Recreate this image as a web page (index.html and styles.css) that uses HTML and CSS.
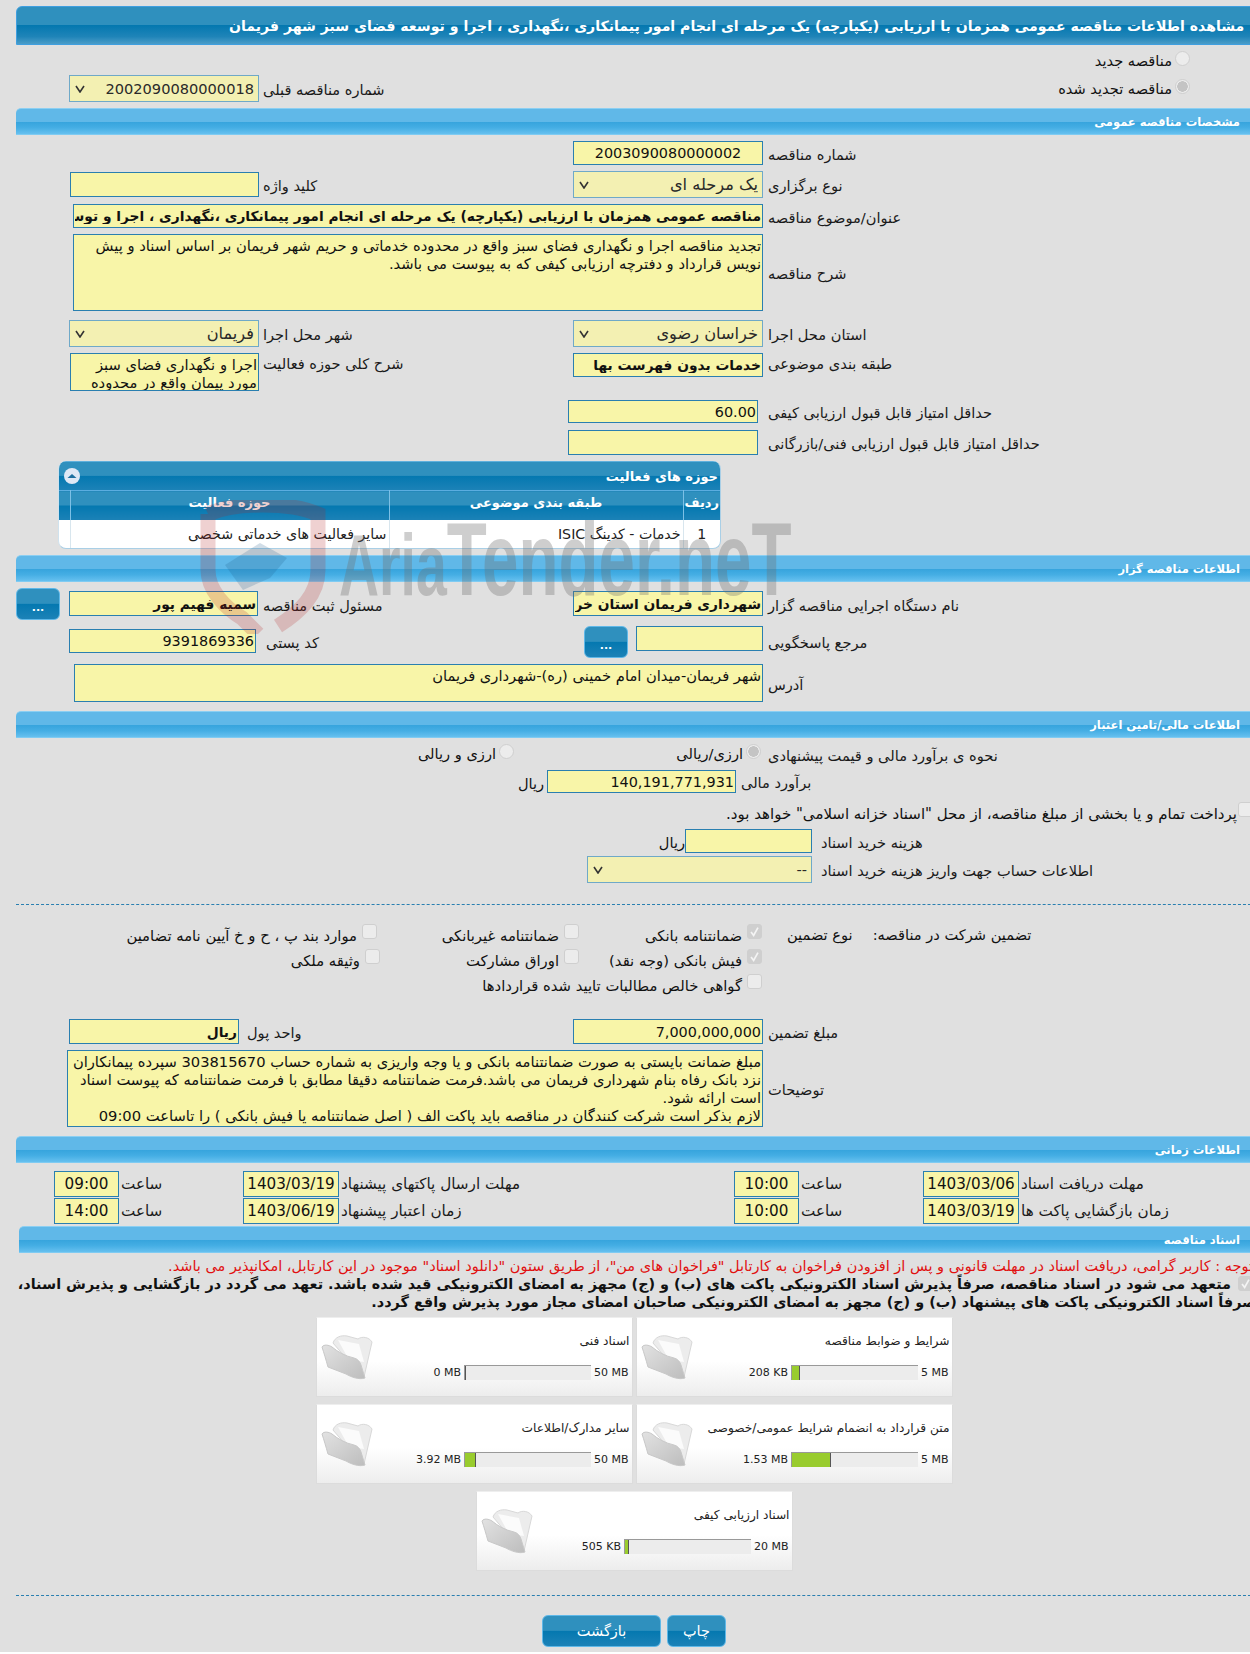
FILE: index.html
```html
<!DOCTYPE html>
<html lang="fa">
<head>
<meta charset="utf-8">
<title>مشاهده اطلاعات مناقصه</title>
<link rel="stylesheet" href="styles.css">
</head>
<body>
<div class="page">
  <div class="pagehead"><span>مشاهده اطلاعات مناقصه عمومی همزمان با ارزیابی (یکپارچه) یک مرحله ای انجام امور پیمانکاری ،نگهداری ، اجرا و توسعه فضای سبز شهر فریمان</span></div>

  <div class="row t6 h22">
    <label class="radio-opt d-end"><input type="radio" disabled><span>مناقصه جدید</span></label>
  </div>
  <div class="row t2 h27">
    <div class="sel a w190 digits"><select disabled><option>2002090080000018</option></select><svg class="chev" viewBox="0 0 10 8"><path d="M1 1l4 6 4-6" /></svg></div>
    <div class="lab b">شماره مناقصه قبلی</div>
    <label class="radio-opt d-end"><input type="radio" disabled checked><span>مناقصه تجدید شده</span></label>
  </div>

  <div class="bar t6">مشخصات مناقصه عمومی</div>

  <div class="row t6 h24">
    <input class="fld c w190" readonly value="2003090080000002" dir="ltr" >
    <div class="lab d">شماره مناقصه</div>
  </div>
  <div class="row t6 h27">
    <input class="fld a w189 h25 top1" readonly>
    <div class="lab b">کلید واژه</div>
    <div class="sel c w190"><select disabled><option>یک مرحله ای</option></select><svg class="chev" viewBox="0 0 10 8"><path d="M1 1l4 6 4-6" /></svg></div>
    <div class="lab d">نوع برگزاری</div>
  </div>
  <div class="row t6 h24">
    <input class="fld long w690 strong" readonly value="مناقصه عمومی همزمان با ارزیابی (یکپارچه) یک مرحله ای انجام امور پیمانکاری ،نگهداری ، اجرا و توسعه فضای سبز شهر فریمان">
    <div class="lab d">عنوان/موضوع مناقصه</div>
  </div>
  <div class="row t6 h77">
    <textarea class="fld long w690" readonly>تجدید مناقصه اجرا و نگهداری فضای سبز واقع در محدوده خدماتی و حریم شهر فریمان بر اساس اسناد و پیش نویس قرارداد و دفترچه ارزیابی کیفی که به پیوست می باشد.</textarea>
    <div class="lab d">شرح مناقصه</div>
  </div>
  <div class="row t9 h27">
    <div class="sel a w190"><select disabled><option>فریمان</option></select><svg class="chev" viewBox="0 0 10 8"><path d="M1 1l4 6 4-6" /></svg></div>
    <div class="lab b">شهر محل اجرا</div>
    <div class="sel c w190"><select disabled><option>خراسان رضوی</option></select><svg class="chev" viewBox="0 0 10 8"><path d="M1 1l4 6 4-6" /></svg></div>
    <div class="lab d">استان محل اجرا</div>
  </div>
  <div class="row t6 h38">
    <textarea class="fld a w189" readonly>اجرا و نگهداری فضای سبز مورد پیمان واقع در محدوده خدماتی</textarea>
    <div class="lab b hi">شرح کلی حوزه فعالیت</div>
    <input class="fld c w190 h24 strong" readonly value="خدمات بدون فهرست بها">
    <div class="lab d hi">طبقه بندی موضوعی</div>
  </div>
  <div class="row t9 h23">
    <input class="fld c w190 shift5" readonly value="60.00" dir="rtl">
    <div class="lab d">حداقل امتیاز قابل قبول ارزیابی کیفی</div>
  </div>
  <div class="row t7 h25">
    <input class="fld c w190 shift5" readonly>
    <div class="lab d">حداقل امتیاز قابل قبول ارزیابی فنی/بازرگانی</div>
  </div>

  <section class="panel">
    <div class="panel-head"><span>حوزه های فعالیت</span>
      <svg class="collapse" viewBox="0 0 16 16"><circle cx="8" cy="8" r="8" fill="#dfe8f5"/><path d="M3.500 10L8 6l4.500 4z" fill="#1f6f9f"/></svg>
    </div>
    <table class="grid">
      <thead><tr><th class="col-n">ردیف</th><th class="col-c">طبقه بندی موضوعی</th><th class="col-h">حوزه فعالیت</th><th class="col-x"></th></tr></thead>
      <tbody><tr><td class="num">1</td><td>خدمات - کدینگ ISIC</td><td>سایر فعالیت های خدماتی شخصی</td><td></td></tr></tbody>
    </table>
  </section>

  <div class="bar t6">اطلاعات مناقصه گزار</div>

  <div class="row t6 h32">
    <div class="a split">
      <button class="btn dots" type="button">...</button>
      <input class="fld w189 h25 strong top3" readonly value="سمیه فهیم پور">
    </div>
    <div class="lab b">مسئول ثبت مناقصه</div>
    <input class="fld c w190 h25 strong top3" readonly value="شهرداری فریمان استان خراسان رضوی">
    <div class="lab d">نام دستگاه اجرایی مناقصه گزار</div>
  </div>
  <div class="row t6 h31">
    <input class="fld a w187 h24 top3 shift3" readonly value="9391869336" >
    <div class="lab b wide">کد پستی</div>
    <div class="c gap8">
      <button class="btn dots" type="button">...</button>
      <input class="fld w127 h25" readonly>
    </div>
    <div class="lab d">مرجع پاسخگویی</div>
  </div>
  <div class="row t7 h38">
    <textarea class="fld long w689" readonly>شهر فریمان-میدان امام خمینی (ره)-شهرداری فریمان</textarea>
    <div class="lab d">آدرس</div>
  </div>

  <div class="bar t9">اطلاعات مالی/تامین اعتبار</div>

  <div class="row t6 h20">
    <div class="radios">
      <label class="radio-opt first"><input type="radio" disabled checked><span>ارزی/ریالی</span></label>
      <label class="radio-opt"><input type="radio" disabled><span>ارزی و ریالی</span></label>
    </div>
    <div class="lab d">نحوه ی برآورد مالی و قیمت پیشنهادی</div>
  </div>
  <div class="line t6 h23 pl-est">
    <span class="unit">ریال</span>
    <input class="fld w189" readonly value="140,191,771,931">
    <span class="lab">برآورد مالی</span>
  </div>
  <div class="check-line t9">
    <input type="checkbox" disabled>
    <span>پرداخت تمام و یا بخشی از مبلغ مناقصه، از محل "اسناد خزانه اسلامی" خواهد بود.</span>
  </div>
  <div class="line t9 h24 pl-doc">
    <span class="unit tight">ریال</span>
    <input class="fld w127" readonly>
    <span class="lab gap9">هزینه خرید اسناد</span>
  </div>
  <div class="line t3 h26 pl-acc">
    <div class="sel w225 digits"><select disabled><option>--</option></select><svg class="chev" viewBox="0 0 10 8"><path d="M1 1l4 6 4-6" /></svg></div>
    <span class="lab gap9">اطلاعات حساب جهت واریز هزینه خرید اسناد</span>
  </div>

  <div class="rule r1"></div>

  <div class="guarantee">
    <label class="chk col3 sh3"><span>موارد بند پ ، ح و خ آیین نامه تضامین</span><input type="checkbox" disabled></label>
    <label class="chk col2"><span>ضمانتنامه غیربانکی</span><input type="checkbox" disabled></label>
    <label class="chk col1"><span>ضمانتنامه بانکی</span><input type="checkbox" disabled checked></label>
    <div class="g-title"><span>نوع تضمین</span><span>تضمین شرکت در مناقصه:</span></div>
    <label class="chk col3"><span>وثیقه ملکی</span><input type="checkbox" disabled></label>
    <label class="chk col2"><span>اوراق مشارکت</span><input type="checkbox" disabled></label>
    <label class="chk col1"><span>فیش بانکی (وجه نقد)</span><input type="checkbox" disabled checked></label>
    <div></div>
    <div></div>
    <label class="chk long-chk col1"><span>گواهی خالص مطالبات تایید شده قراردادها</span><input type="checkbox" disabled></label>
  </div>

  <div class="row t20 h25">
    <input class="fld a w170 shift20 strong" readonly value="ریال">
    <div class="lab b unitlab">واحد پول</div>
    <input class="fld c w190" readonly value="7,000,000,000">
    <div class="lab d">مبلغ تضمین</div>
  </div>
  <div class="row t6 h77">
    <textarea class="fld long w696" readonly>مبلغ ضمانت بایستی به صورت ضمانتنامه بانکی و یا وجه واریزی به شماره حساب 303815670 سپرده پیمانکاران نزد بانک رفاه بنام شهرداری فریمان می باشد.فرمت ضمانتنامه دقیقا مطابق با فرمت ضمانتنامه که پیوست اسناد است ارائه شود.
لازم بذکر است شرکت کنندگان در مناقصه باید پاکت الف ( اصل ضمانتنامه یا فیش بانکی ) را تاساعت 09:00</textarea>
    <div class="lab d">توضیحات</div>
  </div>

  <div class="bar t9">اطلاعات زمانی</div>

  <div class="times t8">
    <div class="tg"><input class="fld w65" readonly value="09:00" dir="ltr"><span class="lab">ساعت</span></div>
    <div class="tg"><input class="fld w96" readonly value="1403/03/19" dir="ltr"><span class="lab">مهلت ارسال پاکتهای پیشنهاد</span></div>
    <div class="tg"><input class="fld w65" readonly value="10:00" dir="ltr"><span class="lab">ساعت</span></div>
    <div class="tg"><input class="fld w96" readonly value="1403/03/06" dir="ltr"><span class="lab">مهلت دریافت اسناد</span></div>
  </div>
  <div class="times t2">
    <div class="tg"><input class="fld w65" readonly value="14:00" dir="ltr"><span class="lab">ساعت</span></div>
    <div class="tg"><input class="fld w96" readonly value="1403/06/19" dir="ltr"><span class="lab">زمان اعتبار پیشنهاد</span></div>
    <div class="tg"><input class="fld w65" readonly value="10:00" dir="ltr"><span class="lab">ساعت</span></div>
    <div class="tg"><input class="fld w96" readonly value="1403/03/19" dir="ltr"><span class="lab">زمان بازگشایی پاکت ها</span></div>
  </div>

  <div class="bar t4 ind">اسناد مناقصه</div>

  <p class="notice">توجه : کاربر گرامی، دریافت اسناد در مهلت قانونی و پس از افزودن فراخوان به کارتابل "فراخوان های من"، از طریق ستون "دانلود اسناد" موجود در این کارتابل، امکانپذیر می باشد.</p>
  <div class="pledge"><input type="checkbox" disabled checked><b>متعهد می شود در اسناد مناقصه، صرفاً پذیرش اسناد الکترونیکی پاکت های (ب) و (ج) مجهز به امضای الکترونیکی قید شده باشد. تعهد می گردد در بازگشایی و پذیرش اسناد، صرفاً اسناد الکترونیکی پاکت های پیشنهاد (ب) و (ج) مجهز به امضای الکترونیکی صاحبان امضای مجاز مورد پذیرش واقع گردد.</b></div>

  <div class="cards">
    <article class="card">
      <h4>شرایط و ضوابط مناقصه</h4>
      <svg class="folder" viewBox="0 0 52 46"><use href="#folder-art"/></svg>
      <div class="meter"><span class="cur">208 KB</span><div class="track"><i class="fill" style="width:8px"></i></div><span class="max">5 MB</span></div>
    </article>
    <article class="card">
      <h4>اسناد فنی</h4>
      <svg class="folder" viewBox="0 0 52 46"><use href="#folder-art"/></svg>
      <div class="meter"><span class="cur">0 MB</span><div class="track"><i class="fill" style="width:0px"></i></div><span class="max">50 MB</span></div>
    </article>
    <article class="card">
      <h4>متن قرارداد به انضمام شرایط عمومی/خصوصی</h4>
      <svg class="folder" viewBox="0 0 52 46"><use href="#folder-art"/></svg>
      <div class="meter"><span class="cur">1.53 MB</span><div class="track"><i class="fill" style="width:39px"></i></div><span class="max">5 MB</span></div>
    </article>
    <article class="card">
      <h4>سایر مدارک/اطلاعات</h4>
      <svg class="folder" viewBox="0 0 52 46"><use href="#folder-art"/></svg>
      <div class="meter"><span class="cur">3.92 MB</span><div class="track"><i class="fill" style="width:11px"></i></div><span class="max">50 MB</span></div>
    </article>
    <article class="card">
      <h4>اسناد ارزیابی کیفی</h4>
      <svg class="folder" viewBox="0 0 52 46"><use href="#folder-art"/></svg>
      <div class="meter"><span class="cur">505 KB</span><div class="track"><i class="fill" style="width:4px"></i></div><span class="max">20 MB</span></div>
    </article>
  </div>

  <div class="rule r2"></div>

  <div class="actions">
    <button class="btn act back" type="button">بازگشت</button>
    <button class="btn act print" type="button">چاپ</button>
  </div>

  <div class="watermark" aria-hidden="true">
    <svg class="wm-shield" viewBox="0 0 126 134">
      <path d="M8 14 C35 2 90 2 118 14 V70 C118 95 100 112 78 126" fill="none" stroke="#b52020" stroke-width="15"/>
      <path d="M8 14 V70 C8 90 25 108 42 118 L58 134" fill="none" stroke="#b52020" stroke-width="15"/>
      <path d="M25 65 L60 43 L87 58 L70 78 L43 90z" fill="#1d5b8a"/>
    </svg>
    <div class="wm-text"><span class="wm-small">Aria</span>Tender.neT</div>
  </div>
</div>

<svg class="defs" width="0" height="0" aria-hidden="true">
  <defs>
    <linearGradient id="fg" x1="0" y1="0" x2="1" y2="1"><stop offset="0" stop-color="#e2e2e2"/><stop offset="1" stop-color="#bdbdbd"/></linearGradient>
    <g id="folder-art">
      <path d="M12 9 C14 3 20 1 26 2 L37 5 C41 2 48 3 51 8 L43 43 L30 30z" fill="#ececec" stroke="#d8d8d8"/>
      <path d="M17 6 L38 10 L43 28 L28 26z" fill="#fbfbfb"/>
      <path d="M1 13 C3 10 8 11 11 13 C17 18 24 22 33 24 C37 25 39 28 40 31 L44 44 C38 46 30 43 25 40 L7 33 C5 26 3 19 1 13z" fill="url(#fg)" stroke="#c8c8c8"/>
    </g>
  </defs>
</svg>
</body>
</html>
```
FILE: styles.css
```css
html { background: #fff; }
* { box-sizing: border-box; }
html, body { margin: 0; padding: 0; overflow-x: hidden; }
input, textarea, select, button { margin: 0; }
body {
  background: #e0e0e0;
  height: 1652px;
  font-family: "DejaVu Sans", Tahoma, sans-serif;
  font-size: 14.6px;
  color: #111;
  width: 1250px;
  overflow: hidden;
}
.page {
  position: relative;
  width: 1240px;
  margin-left: 16px;
  padding-top: 6px;
}
.defs { position: absolute; }

/* spacing helpers */
.t2 { margin-top: 2px; } .t3 { margin-top: 3px; } .t4 { margin-top: 4px; }
.t6 { margin-top: 6px; } .t7 { margin-top: 7px; } .t8 { margin-top: 8px; }
.t9 { margin-top: 9px; } .t20 { margin-top: 20px; }
.h20 { height: 20px; } .h22 { height: 22px; } .h23 { height: 23px; } .h24 { height: 24px; }
.h25 { height: 25px; } .h26 { height: 26px; } .h27 { height: 27px; } .h31 { height: 31px; }
.h32 { height: 32px; } .h38 { height: 38px; } .h77 { height: 77px; }
.w65 { width: 65px; } .w96 { width: 96px; } .w127 { width: 127px; } .w170 { width: 170px; }
.w187 { width: 187px; } .w189 { width: 189px; } .w190 { width: 190px; } .w225 { width: 225px; }
.w689 { width: 689px; } .w690 { width: 690px; } .w696 { width: 696px; }

/* headers */
.pagehead {
  height: 39px;
  display: flex;
  justify-content: flex-start;
  align-items: center;
  padding-left: 212px;
  overflow: hidden;
  border: 1px solid #3f9fe0;
  border-radius: 6px 6px 0 0;
  background: linear-gradient(#2f90be 0, #2f90be 48%, #0478b0 50%, #1f84b8 80%, #4a9cc8 100%);
  color: #fff;
  font-weight: bold;
  font-size: 14.100px;
}
.pagehead span { direction: rtl; white-space: nowrap; flex: none; }
.bar {
  height: 27px;
  line-height: 26px;
  direction: rtl;
  padding-right: 16px;
  border-top: 1px solid #8ccff2;
  border-bottom: 1px solid #7fcbf2;
  border-radius: 5px 5px 0 0;
  background: linear-gradient(#60b8e8 0, #60b8e8 50%, #36a4dd 52%, #45aee4 75%, #66c0ef 100%);
  color: #fff;
  font-weight: bold;
  font-size: 11.500px;
}
.bar.ind { margin-left: 3px; }

/* form rows */
.row {
  display: grid;
  grid-template-columns: 243px 250px 254px 1fr;
  grid-template-rows: minmax(0, 1fr);
  align-items: start;
}
.a { grid-column: 1; justify-self: end; }
.b { grid-column: 2; }
.c { grid-column: 3; justify-self: end; }
.d { grid-column: 4; }
.long { grid-column: 1 / 4; justify-self: end; }
.d-end { grid-column: 4; justify-self: end; margin-right: 66px; }
.split { width: 243px; display: flex; justify-content: space-between; padding-right: 1px; }
.gap8 { display: flex; gap: 8px; align-items: flex-start; }
.top1 { margin-top: 1px; }
.top3 { margin-top: 3px; }
.shift3 { margin-right: 3px; }
.shift5 { margin-right: 5px; }
.shift20 { margin-right: 20px; }

.lab {
  direction: rtl;
  text-align: left;
  white-space: nowrap;
  padding-left: 5px;
  padding-top: 3px;
  line-height: 20px;
  color: #1a1a1a;
}
.row > .lab { align-self: center; }
.row > .lab.hi { align-self: start; padding-top: 0; line-height: 21px; }
.b.lab { padding-left: 4px; }
.b.wide { padding-left: 7px; }
.b.unitlab { margin-left: -16px; }

/* controls */
.fld {
  display: block;
  direction: rtl;
  font-family: inherit;
  font-size: 14.4px;
  color: #111;
  background: #f8f5a8;
  border: 1px solid #2a7fb0;
  border-radius: 0;
  padding: 0 1px;
  height: 100%;
  outline: none;
  overflow: hidden;
  resize: none;
  text-align: right;
}
input.fld[dir="ltr"] { text-align: center; }
input.h25 { height: 25px; }
input.h24 { height: 24px; }
textarea.fld { height: 100%; line-height: 18px; font-size: 14.700px; padding: 2px 1px; }
.strong { font-weight: bold; font-size: 13.800px; }
.sel {
  position: relative;
  height: 27px;
  background: #f3f0b2;
  border: 1px solid #6fa9c8;
}
.sel select {
  appearance: none;
  width: 100%;
  height: 100%;
  border: 0;
  background: transparent;
  direction: rtl;
  font: 16.200px "DejaVu Sans", sans-serif;
  color: #2a2a2a;
  opacity: 1;
  padding: 0 4px 0 0;
}
.sel.digits select { font-size: 14.600px; }
.chev {
  position: absolute;
  left: 5px;
  top: 9px;
  width: 10px;
  height: 8px;
}
.chev path { fill: none; stroke: #333; stroke-width: 1.6; }

/* radios and checkboxes */
input[type="radio"], input[type="checkbox"] {
  appearance: none;
  flex: none;
  width: 15px;
  height: 15px;
  background: #ececec;
  border: 1px solid #cfcfcf;
}
input[type="radio"] { border-radius: 50%; }
input[type="radio"]:checked { background: radial-gradient(circle, #c4c4c4 0 5px, #ececec 5.500px); }
input[type="checkbox"] { border-radius: 3px; }
input[type="checkbox"]:checked {
  background: #cfcfcf url("data:image/svg+xml,%3Csvg xmlns='http://www.w3.org/2000/svg' viewBox='0 0 15 15'%3E%3Cpath d='M3.500 8l3 4 5-9' fill='none' stroke='%23f4f4f4' stroke-width='2'/%3E%3C/svg%3E");
}
.radio-opt {
  display: flex;
  direction: rtl;
  align-items: flex-start;
  gap: 3px;
  white-space: nowrap;
}
.radio-opt span { padding-top: 1px; line-height: 18px; }
.row.h27 > .radio-opt { margin-top: 4px; }
.radios {
  grid-column: 2 / 4;
  direction: rtl;
  display: flex;
  padding-right: 2px;
}
.radios .first { width: 247px; }
.radios .radio-opt span { padding-top: 1px; }

/* single lines */
.line { display: flex; align-items: center; }
.pl-est { padding-left: 502px; }
.pl-doc { padding-left: 646px; }
.pl-acc { padding-left: 571px; }
.unit { width: 29px; text-align: left; direction: rtl; padding-top: 3px; }
.unit.tight { width: 23px; }
.lab.gap9 { padding-left: 9px; }
.check-line {
  direction: rtl;
  display: flex;
  gap: 1px;
  align-items: flex-start;
  height: 18px;
  padding-right: 3px;
  white-space: nowrap;
  font-size: 15px;
}
.check-line span { padding-top: 3px; line-height: 18px; }

.rule { border-top: 1px dashed #2a7fb0; }
.rule.r1 { margin-top: 22px; }
.rule.r2 { margin-top: 24px; }

/* guarantee */
.guarantee {
  margin-top: 19px;
  display: grid;
  grid-template-columns: 364px 200px 183px 1fr;
  grid-auto-rows: 25px;
}
.chk {
  direction: rtl;
  display: flex;
  align-items: flex-start;
  gap: 5px;
  white-space: nowrap;
  font-size: 14.800px;
}
.chk input { order: -1; }
.chk span { padding-top: 3px; line-height: 18px; }
.sh3 { padding-right: 3px; }
.col1 { padding-right: 1px; }
.col2 { padding-right: 1px; }
.long-chk { grid-column: 3; }
.g-title {
  display: flex;
  gap: 20px;
  padding-left: 24px;
  padding-top: 1px;
  line-height: 20px;
  white-space: nowrap;
}
.g-title span { direction: rtl; }

/* activity panel */
.panel {
  margin: 6px 0 0 42px;
  width: 663px;
  height: 88px;
  direction: rtl;
  border-radius: 8px;
  overflow: hidden;
  background: #fff;
  border: 1px solid #a9cfe6;
  border-top: 0;
  border-left-color: #cfe2ee;
}
.panel-head {
  height: 29px;
  position: relative;
  display: flex;
  align-items: center;
  padding-right: 2px;
  color: #fff;
  font-weight: bold;
  font-size: 13px;
  border-top: 1px solid #5fb0dc;
  background: linear-gradient(#2f90be 0, #2f90be 48%, #0478b0 50%, #1c82b7 100%);
}
.collapse { position: absolute; left: 5px; top: 6px; width: 16px; height: 16px; }
.grid { width: 100%; table-layout: fixed; border-collapse: collapse; }
.grid th {
  height: 29px;
  color: #fff;
  font-size: 13px;
  font-weight: bold;
  border-left: 1px solid #7cc0e6;
  border-top: 1px solid #5bade0;
  background: linear-gradient(#2f90be 0, #2f90be 48%, #0478b0 50%, #1c82b7 100%);
  padding: 0 0 5px;
}
.grid td {
  height: 29px;
  text-align: right;
  font-size: 14.200px;
  padding: 0 2px;
  border-left: 1px solid #d8e6ee;
  border-bottom: 2px solid #cfe2ee;
  color: #222;
}
.grid td.num { text-align: center; }
.col-n { width: 37px; }
.col-c { width: 294px; }
.col-h { width: 319px; }
.col-x { width: 12px; }

/* times */
.times {
  display: grid;
  grid-template-columns: 189px 491px 189px 1fr;
  padding-left: 38px;
  height: 24.500px;
}
.tg { display: flex; gap: 2px; }
.tg .fld { font-size: 15.200px; }
.tg .lab { padding: 0; line-height: 26px; font-size: 15.200px; }

/* documents */
.notice {
  margin: 4px 0 0;
  direction: rtl;
  color: #e11010;
  font-size: 14.500px;
  line-height: 18px;
  padding-right: 3px;
  white-space: nowrap;
}
.pledge {
  direction: rtl;
  line-height: 17.500px;
  font-size: 14.400px;
  color: #111;
  padding-top: 1px;
}
.pledge input { float: right; margin: 0 3px 0 7px; width: 15px; height: 15px; }
.cards {
  margin: 6px auto 0 298px;
  width: 640px;
  direction: rtl;
  display: flex;
  flex-wrap: wrap;
  justify-content: center;
  gap: 7px 3px;
}
.card {
  position: relative;
  width: 317px;
  height: 80px;
  background: linear-gradient(#fff 0, #fff 55%, #ededed 100%);
  border: 1px solid #dcdcdc;
  border-top-color: #eee;
}
.card h4 {
  margin: 0;
  padding: 15px 2px 0 0;
  font-size: 12.200px;
  font-weight: normal;
  line-height: 16px;
  color: #222;
}
.folder { position: absolute; left: 4px; top: 16px; width: 52px; height: 46px; }
.meter {
  position: absolute;
  left: 70px;
  right: 3px;
  top: 47px;
  display: flex;
  direction: ltr;
  align-items: center;
  gap: 3px;
  justify-content: flex-end;
  font-size: 11px;
  white-space: nowrap;
  color: #222;
}
.track {
  width: 127px;
  height: 15px;
  background: #ececec;
  border-top: 1px solid #999;
  border-left: 1px solid #999;
  flex: none;
}
.fill { display: block; height: 100%; background: #99cc2e; border-right: 1px solid #555; }

/* buttons */
.btn {
  color: #fff;
  font-family: inherit;
  border: 1px solid #5fb8e8;
  border-radius: 6px;
  background: linear-gradient(#2f90be 0, #2f90be 48%, #0478b0 50%, #1c82b7 100%);
  padding: 0;
}
.dots { width: 44px; height: 32px; font-size: 11px; font-weight: bold; padding-top: 6px; }
.actions { display: flex; margin: 19px 0 0 526px; gap: 6px; }
.act { height: 32px; font-size: 14.500px; }
.back { width: 119px; }
.print { width: 59px; }

/* watermark */
.watermark { position: absolute; left: 0; top: 0; pointer-events: none; }
.wm-shield { position: absolute; left: 184px; top: 500px; width: 126px; height: 134px; opacity: .2; }
.wm-text {
  position: absolute;
  left: 323px;
  top: 504px;
  white-space: nowrap;
  font-family: "Liberation Sans", sans-serif;
  font-weight: bold;
  font-size: 104px;
  line-height: 110px;
  color: #6e6e6e;
  opacity: .33;
  transform-origin: left top;
  transform: scaleX(.63);
}
.wm-small { font-size: 88px; }
```
